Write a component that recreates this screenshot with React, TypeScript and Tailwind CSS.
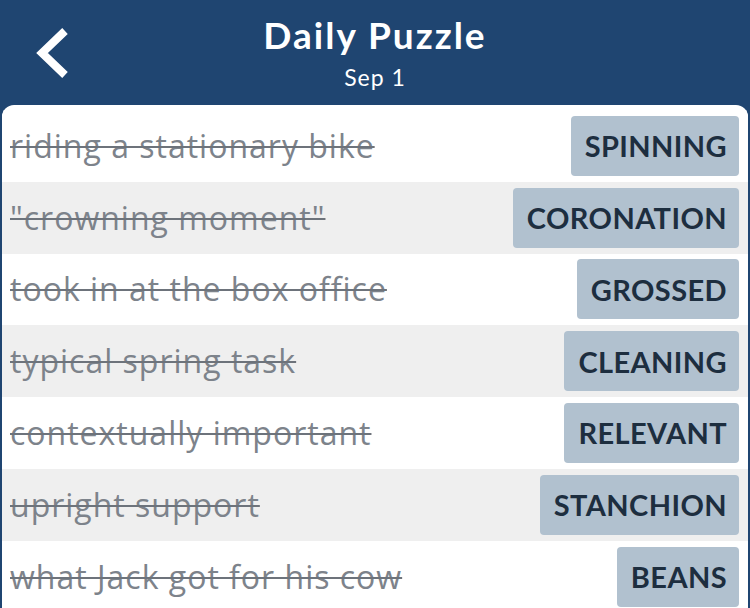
import React from "react";

const rows: { clue: string; answer: string }[] = [
  { clue: "riding a stationary bike", answer: "SPINNING" },
  { clue: "\"crowning moment\"", answer: "CORONATION" },
  { clue: "took in at the box office", answer: "GROSSED" },
  { clue: "typical spring task", answer: "CLEANING" },
  { clue: "contextually important", answer: "RELEVANT" },
  { clue: "upright support", answer: "STANCHION" },
  { clue: "what Jack got for his cow", answer: "BEANS" },
];

export default function App() {
  return (
    <div
      className="w-[750px] h-[608px] overflow-hidden bg-[#1f4571] flex flex-col"
      style={{ fontFamily: "Lato, 'Noto Sans', sans-serif" }}
    >
      <div className="relative h-[105px] shrink-0 flex flex-col items-center text-white">
        <svg
          className="absolute left-[34px] top-[27px]"
          width="36"
          height="52"
          viewBox="0 0 36 52"
        >
          <polyline
            points="31,4 8,26 31,48"
            fill="none"
            stroke="white"
            strokeWidth="8"
            strokeLinecap="butt"
            strokeLinejoin="miter"
          />
        </svg>
        <div className="mt-[13px] text-[37px] leading-[44px] font-bold tracking-[2px]">Daily Puzzle</div>
        <div className="mt-[7px] text-[23px] leading-[26px] tracking-[1px]">Sep 1</div>
      </div>
      <div className="flex-1 mx-[2px] bg-white rounded-t-[12px] overflow-hidden pt-[5px]">
        {rows.map((r, i) => (
          <div
            key={i}
            className={`h-[71.8px] flex items-center justify-between pl-[8px] pr-[9px] ${
              i % 2 === 1 ? "bg-[#efefef]" : "bg-white"
            }`}
          >
            <span
              className="text-[32px] tracking-[1px] text-[#7d838b] line-through decoration-[2px] decoration-[#6d737b] whitespace-nowrap"
              style={{ fontFamily: "'Open Sans', sans-serif" }}
            >
              {r.clue}
            </span>
            <span className="h-[60px] flex items-center pl-[14px] pr-[12px] rounded-[4px] bg-[#b1c1cf] text-[#1d2e3f] text-[29px] font-bold tracking-[0.4px]">
              {r.answer}
            </span>
          </div>
        ))}
      </div>
    </div>
  );
}
